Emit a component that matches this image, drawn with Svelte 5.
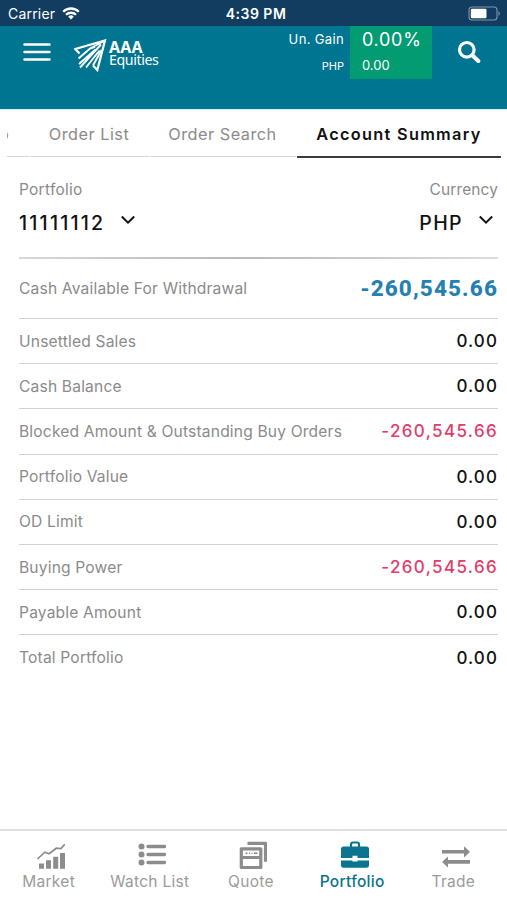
<script>
  const rows = [
    { label: 'Cash Available For Withdrawal', value: '-260,545.66', kind: 'total' },
    { label: 'Unsettled Sales', value: '0.00' },
    { label: 'Cash Balance', value: '0.00' },
    { label: 'Blocked Amount & Outstanding Buy Orders', value: '-260,545.66', kind: 'negative' },
    { label: 'Portfolio Value', value: '0.00' },
    { label: 'OD Limit', value: '0.00' },
    { label: 'Buying Power', value: '-260,545.66', kind: 'negative' },
    { label: 'Payable Amount', value: '0.00' },
    { label: 'Total Portfolio', value: '0.00' }
  ];
  const nav = ['Market', 'Watch List', 'Quote', 'Portfolio', 'Trade'];
</script>

{#snippet chevron()}
  <svg class="chevron" width="16" height="10" viewBox="0 0 16 10" fill="none" stroke="#151515" stroke-width="2"><path d="M1.8 1.5 8 7.7l6.2-6.2" /></svg>
{/snippet}

<div class="screen">
  <div class="status">
    <div class="carrier">
      <span>Carrier</span>
      <svg width="18" height="13" viewBox="0 0 18 13" fill="none" stroke="#fff" stroke-width="2.3">
        <path d="M1.2 4.7a11.1 11.1 0 0 1 15.6 0M4 7.8a7.1 7.1 0 0 1 10 0" />
        <path d="M9 12.4 6.2 9.7a4 4 0 0 1 5.6 0z" fill="#fff" stroke="none" />
      </svg>
    </div>
    <div class="time">4:39 PM</div>
    <svg class="battery" width="33" height="15" viewBox="0 0 33 15">
      <rect x="1" y="1" width="28" height="13" rx="3" fill="none" stroke="#8195ab" stroke-width="1.1" />
      <rect x="2.8" y="2.8" width="15.7" height="9.4" rx="1.2" fill="#fff" />
      <path d="M30.5 5.2c1.7.6 1.7 4 0 4.600z" fill="#8195ab" />
    </svg>
  </div>

  <header>
    <svg class="menu" width="28" height="20" viewBox="0 0 28 20" stroke="#fff" stroke-width="2.5" stroke-linecap="round"><path d="M1.500 2.500h25M1.500 10h25M1.500 17.500h25" /></svg>
    <div class="brand">
      <svg width="33" height="33" viewBox="0 0 33 33" fill="none" stroke="#fff">
        <path d="M5.500 14.500 1.300 10 31 1.500 23.300 31l-4.300-4.500" stroke-width="2.200" />
        <path d="M31 1.500 16 9.500 4.500 19.500M16 9.500 21 7.800M21.500 10.500 5 25M27 5.500 6 28.500M25.500 11.500 12 28.500M27.500 11 19 26.500" stroke-width="1.900" />
      </svg>
      <div class="name"><b>AAA</b><span>Equities</span></div>
    </div>
    <div class="gain"><span class="g1">Un. Gain</span><span class="g2">PHP</span></div>
    <div class="badge"><span class="b1">0.00%</span><span class="b2">0.00</span></div>
    <svg class="search" width="24" height="24" viewBox="0 0 24 24" fill="none" stroke="#fff"><circle cx="9.800" cy="9.800" r="7.300" stroke-width="3.200" /><path d="m15.300 15.300 6 5.700" stroke-width="4" stroke-linecap="round" /></svg>
  </header>

  <nav class="tabs">
    <div class="tab cut"><span>o</span></div>
    <div class="tab list"><span>Order List</span></div>
    <div class="tab find"><span>Order Search</span></div>
    <div class="tab active"><span>Account Summary</span></div>
  </nav>

  <main>
    <div class="selectors">
      <div class="select">
        <span class="caption">Portfolio</span>
        <div class="choice"><span class="account">11111112</span>{@render chevron()}</div>
      </div>
      <div class="select right">
        <span class="caption">Currency</span>
        <div class="choice"><span class="currency">PHP</span>{@render chevron()}</div>
      </div>
    </div>
    <div class="divider"></div>
    {#each rows as row}
      <div class="row {row.kind ?? ''}">
        <span class="label">{row.label}</span>
        <span class="value">{row.value}</span>
      </div>
    {/each}
  </main>

  <footer>
    {#each nav as item, i}
      <div class="item" class:on={item === 'Portfolio'}>
        <svg width="34" height="30" viewBox="0 0 34 30" fill="currentColor">
          {#if i === 0}
            <path d="M8 22.500h5v5.200H8zM15 19.300h5v8.400h-5zM22.200 15.800h5v11.900h-5zM29 12h5v15.700h-5z" />
            <path d="m6.500 18 7.300-6.800 4.300 1.500 7.200-5.500 4.500.5 4-4.300" fill="none" stroke="currentColor" stroke-width="1.700" />
          {:else if i === 1}
            <circle cx="9.500" cy="5.500" r="3" /><circle cx="9.500" cy="13.500" r="3" /><circle cx="9.500" cy="21.500" r="3" />
            <path d="M16 5.500h16.500M16 13.500h16.500M16 21.500h16.500" stroke="currentColor" stroke-width="3.400" stroke-linecap="round" />
          {:else if i === 2}
            <path d="M14.500 2.300h18v18.500M8.300 7.800h19.500v18.700H8.300zM8.300 16.500h19.500" fill="none" stroke="currentColor" stroke-width="3.200" stroke-linejoin="round" />
            <path d="M12.500 12.300h2M16 12.300h1M18.500 12.300h1M21 12.300h3.500" stroke="currentColor" stroke-width="1.600" />
          {:else if i === 3}
            <path d="M16 6V3.500a2 2 0 0 1 2-2h4a2 2 0 0 1 2 2V6" fill="none" stroke="currentColor" stroke-width="2.200" />
            <path d="M8.500 5.600h23q2.500 0 2.500 2.500v9H22.500v-2.300h-5v2.300H6v-9q0-2.500 2.500-2.500zM6 19.500h11.500v1h5v-1H34v5q0 2.300-2.500 2.300h-23Q6 26.800 6 24.500z" />
          {:else}
            <path d="M6 8.900h22V5.200l6 5.600-6 5.600v-3.800H6zM34 19.100H12v-3.700L6 21l6 5.600v-3.800h22z" />
          {/if}
        </svg>
        <span>{item}</span>
      </div>
    {/each}
  </footer>
</div>

<style>
  :global(body) { background: #fff; }
  .screen { width: 507px; height: 900px; display: flex; flex-direction: column; overflow: hidden; font-family: Inter, sans-serif; color: #111; white-space: nowrap; }
  span { white-space: nowrap; }
  .status { height: 26px; flex: none; background: #123d60; color: #fff; display: grid; grid-template-columns: 1fr auto 1fr; align-items: center; padding: 1px 6px 0 8px; box-sizing: border-box; }
  .carrier { display: flex; align-items: center; gap: 7px; font-size: 14px; letter-spacing: .2px; }
  .time { font-size: 14px; font-weight: 600; letter-spacing: .5px; padding-left: 3px; }
  .battery { justify-self: end; }
  header { height: 83px; flex: none; background: #007592; border-bottom: 1px solid #d2f1fa; color: #fff; display: flex; align-items: flex-start; }
  .menu { margin: 16px 0 0 23px; flex: none; }
  .brand { display: flex; margin: 13px 0 0 23px; width: 88px; gap: 2px; }
  .brand svg { flex: none; }
  .name { display: flex; flex-direction: column; padding-top: 2px; }
  .name b { font-family: "Noto Sans", sans-serif; font-size: 16px; line-height: 13px; font-weight: 700; letter-spacing: .2px; }
  .name span { font-family: "Noto Sans", sans-serif; font-size: 14.200px; line-height: 12px; letter-spacing: -.4px; }
  .gain { flex: 1; display: flex; flex-direction: column; align-items: flex-end; padding-right: 6px; }
  .g1 { font-size: 13px; line-height: 26px; letter-spacing: .35px; }
  .g2 { font-size: 11px; line-height: 28px; }
  .badge { width: 82px; height: 53px; background: #039b72; display: flex; flex-direction: column; box-sizing: border-box; padding-left: 12px; }
  .b1 { font-size: 18px; line-height: 28px; letter-spacing: .7px; }
  .b2 { font-size: 13px; line-height: 22px; }
  .search { margin: 14px 26px 0 25px; flex: none; }

  .tabs { display: flex; height: 48px; flex: none; padding: 0 6px 0 7px; gap: 1px; font-size: 16.300px; line-height: 49px; color: #8b8b8b; letter-spacing: .5px; }
  .tab { box-sizing: border-box; border-bottom: 1px solid #d6d6d6; text-align: center; height: 47px; flex: none; }
  .cut { width: 22px; display: flex; justify-content: flex-start; overflow: hidden; }
  .cut span { margin-left: -8px; }
  .list { width: 119px; }
  .find { width: 146px; }
  .list span, .find span { margin-left: -1px; }
  .active { width: 204px; height: 48px; border-bottom: 2px solid #3b3b3b; color: #111; font-weight: 600; letter-spacing: 1.300px; }
  main { flex: 1; padding: 0 9px 0 19px; }
  .selectors { height: 99px; display: flex; justify-content: space-between; padding-top: 21px; box-sizing: border-box; }
  .select { display: flex; flex-direction: column; }
  .right { align-items: flex-end; }
  .caption { color: #8b8b8b; font-size: 15.500px; line-height: 22px; letter-spacing: .25px; }
  .right .caption { letter-spacing: .1px; }
  .choice { display: flex; align-items: center; height: 43px; gap: 15px; font-size: 19.500px; font-weight: 500; }
  .right .choice { gap: 15px; padding-right: 4px; }
  .account { letter-spacing: 2.200px; }
  .currency { letter-spacing: 1.400px; }
  .chevron { margin-top: -5px; }
  .divider { height: 2px; background: linear-gradient(90deg, #d8d8d8, #b9b9b9 45%, #dcdcdc); }
  .row { height: 45.200px; box-sizing: border-box; border-bottom: 1px solid #d2d2d2; display: flex; justify-content: space-between; align-items: center; }
  .row:last-child { border: 0; }
  .row.total { height: 60px; }
  .label { color: #8b8b8b; font-size: 15.600px; letter-spacing: .17px; }
  .value { font-size: 17px; font-weight: 500; letter-spacing: 1.100px; }
  .negative .value { color: #e33c6b; font-weight: 450; letter-spacing: 1.350px; }
  .total .value { font-family: Roboto, sans-serif; color: #2480b0; font-size: 22.500px; font-weight: 800; letter-spacing: 1.100px; position: relative; top: -1px; }
  footer { height: 71px; flex: none; box-sizing: border-box; border-top: 2px solid #e1e1e1; display: grid; grid-template-columns: repeat(5, 101.200px); padding-top: 10px; color: #8c8c8c; }
  .item { display: flex; flex-direction: column; align-items: center; font-size: 15.500px; line-height: 21px; letter-spacing: .3px; }
  .item svg { margin-left: -5px; }
  .item span { color: #9b9b9b; margin-left: -4px; }
  .on, .item.on span { color: #0b7490; }
  .item.on span { font-weight: 500; }
</style>
